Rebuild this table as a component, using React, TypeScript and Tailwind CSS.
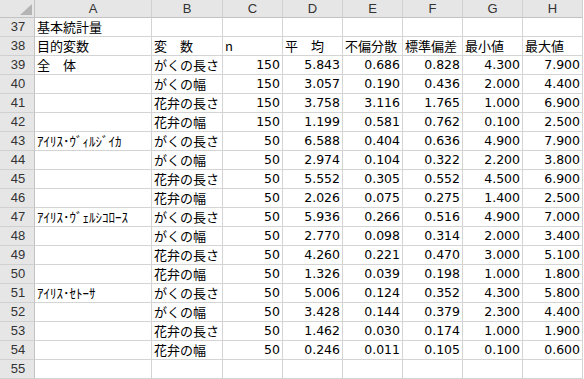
import React from "react";

const rows: (string | number)[][] = [
  ["基本統計量", "", "", "", "", "", "", ""],
  ["目的変数", "変　数", "n", "平　均", "不偏分散", "標準偏差", "最小値", "最大値"],
  ["全　体", "がくの長さ", "150", "5.843", "0.686", "0.828", "4.300", "7.900"],
  ["", "がくの幅", "150", "3.057", "0.190", "0.436", "2.000", "4.400"],
  ["", "花弁の長さ", "150", "3.758", "3.116", "1.765", "1.000", "6.900"],
  ["", "花弁の幅", "150", "1.199", "0.581", "0.762", "0.100", "2.500"],
  ["ｱｲﾘｽ･ｳﾞｨﾙｼﾞｲｶ", "がくの長さ", "50", "6.588", "0.404", "0.636", "4.900", "7.900"],
  ["", "がくの幅", "50", "2.974", "0.104", "0.322", "2.200", "3.800"],
  ["", "花弁の長さ", "50", "5.552", "0.305", "0.552", "4.500", "6.900"],
  ["", "花弁の幅", "50", "2.026", "0.075", "0.275", "1.400", "2.500"],
  ["ｱｲﾘｽ･ｳﾞｪﾙｼｺﾛｰｽ", "がくの長さ", "50", "5.936", "0.266", "0.516", "4.900", "7.000"],
  ["", "がくの幅", "50", "2.770", "0.098", "0.314", "2.000", "3.400"],
  ["", "花弁の長さ", "50", "4.260", "0.221", "0.470", "3.000", "5.100"],
  ["", "花弁の幅", "50", "1.326", "0.039", "0.198", "1.000", "1.800"],
  ["ｱｲﾘｽ･ｾﾄｰｻ", "がくの長さ", "50", "5.006", "0.124", "0.352", "4.300", "5.800"],
  ["", "がくの幅", "50", "3.428", "0.144", "0.379", "2.300", "4.400"],
  ["", "花弁の長さ", "50", "1.462", "0.030", "0.174", "1.000", "1.900"],
  ["", "花弁の幅", "50", "0.246", "0.011", "0.105", "0.100", "0.600"],
  ["", "", "", "", "", "", "", ""],
];

const cols = ["A", "B", "C", "D", "E", "F", "G", "H"];

export default function App() {
  return (
    <div className="w-[584px] h-[379px] bg-white overflow-hidden">
      <div className="grid grid-cols-[35px_117px_71px_60px_60px_60px_60px_60px_60px] grid-rows-[18px_repeat(19,19px)]">
        <div className="relative bg-[#e6e6e6] border-r border-b border-[#c2c2c2]">
          <svg className="absolute right-[1px] bottom-[1px]" width="14" height="12" viewBox="0 0 14 12">
            <polygon points="13,0 13,11 1,11" fill="#b4b4b4" />
          </svg>
        </div>
        {cols.map((c) => (
          <div
            key={c}
            className="bg-[#e6e6e6] border-r border-b border-r-[#d0d0d0] border-b-[#c2c2c2] flex items-center justify-center text-[13px] text-[#333] font-['Liberation_Sans',sans-serif]"
          >
            {c}
          </div>
        ))}
        {rows.map((r, i) => (
          <React.Fragment key={i}>
            <div className="bg-[#e6e6e6] border-r border-b border-r-[#c2c2c2] border-b-[#d0d0d0] flex items-center justify-center text-[13px] text-[#333] font-['Liberation_Sans',sans-serif] pl-[2px]">
              {37 + i}
            </div>
            {r.map((v, j) => {
              const s = String(v);
              const numeric = /^[0-9.]+$/.test(s) && i >= 2;
              return (
                <div
                  key={j}
                  className={
                    numeric
                      ? "border-r border-b border-[#d4d4d4] flex items-center justify-end pr-[2px] text-[12.5px] text-black font-['DejaVu_Sans',sans-serif] whitespace-nowrap overflow-hidden"
                      : "border-r border-b border-[#d4d4d4] flex items-center pl-[2px] text-[13px] text-black font-['Noto_Sans_CJK_JP','DejaVu_Sans',sans-serif] whitespace-nowrap overflow-hidden"
                  }
                >
                  {s}
                </div>
              );
            })}
          </React.Fragment>
        ))}
      </div>
    </div>
  );
}
